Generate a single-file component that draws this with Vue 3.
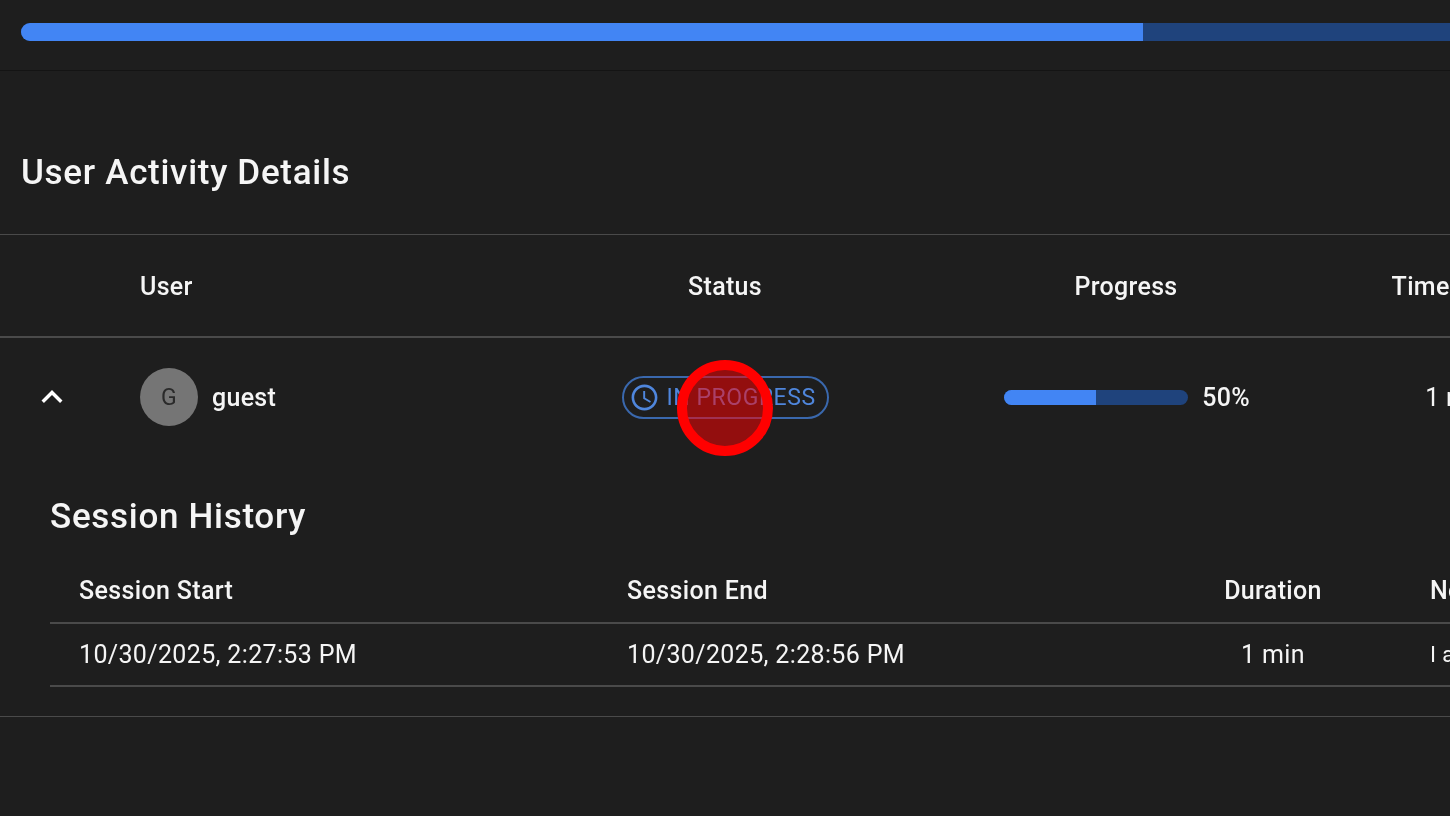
<script setup>
const sessions = [
  { start: '10/30/2025, 2:27:53 PM', end: '10/30/2025, 2:28:56 PM', duration: '1 min', notes: 'I am testing' }
]
</script>

<template>
  <div class="page">
    <div class="top">
      <div class="bar big"><div class="fill big-fill"></div></div>
    </div>

    <h2 class="title">User Activity Details</h2>

    <section class="table">
      <div class="row head">
        <div></div>
        <div class="cell user-head">User</div>
        <div class="cell center">Status</div>
        <div class="cell center">Progress</div>
        <div class="cell center">Time Spent</div>
      </div>

      <div class="row body">
        <div class="expander">
          <svg width="42" height="42" viewBox="0 0 24 24" fill="#fff"><path d="M12 8l-6 6 1.41 1.41L12 10.83l4.59 4.58L18 14z" /></svg>
        </div>
        <div class="cell user">
          <span class="avatar">G</span>
          <span class="name">guest</span>
        </div>
        <div class="cell center">
          <span class="chip">
            <svg width="31" height="31" viewBox="0 0 24 24" fill="#4f86dc"><path d="M11.99 2C6.47 2 2 6.48 2 12s4.47 10 9.99 10C17.52 22 22 17.52 22 12S17.52 2 11.99 2zM12 20c-4.42 0-8-3.58-8-8s3.58-8 8-8 8 3.58 8 8-3.58 8-8 8z" /><path d="M12.5 7H11v6l5.25 3.15.75-1.23-4.5-2.67z" /></svg>
            <span>IN PROGRESS</span>
          </span>
        </div>
        <div class="cell center progress-cell">
          <div class="progress">
            <div class="bar small"><div class="fill small-fill"></div></div>
            <span class="pct">50%</span>
          </div>
        </div>
        <div class="cell center time">1 min</div>
      </div>

      <div class="detail">
        <h3 class="sub-title">Session History</h3>
        <div class="sub-row sub-head">
          <div>Session Start</div>
          <div>Session End</div>
          <div class="center">Duration</div>
          <div>Notes</div>
        </div>
        <div v-for="s in sessions" :key="s.start" class="sub-row sub-body">
          <div>{{ s.start }}</div>
          <div>{{ s.end }}</div>
          <div class="center">{{ s.duration }}</div>
          <div class="note">{{ s.notes }}</div>
        </div>
      </div>
    </section>

    <div class="marker"></div>
  </div>
</template>

<style>
html, body { margin: 0; background: #1e1e1e; overflow: hidden; }
</style>

<style scoped>
.page {
  position: relative;
  width: 1450px;
  height: 816px;
  overflow: hidden;
  background: #1e1e1e;
  color: #f5f5f5;
  font-family: Roboto, "Liberation Sans", sans-serif;
  filter: blur(0.5px);
}
.top {
  box-sizing: border-box;
  width: 1450px;
  height: 71px;
  padding: 23px 0 0 21px;
  border-bottom: 1px solid #141414;
}
.bar { background: #1f437c; overflow: hidden; }
.fill { height: 100%; background: #4285f4; }
.big { width: 1500px; height: 18px; border-radius: 9px 0 0 9px; }
.big-fill { width: 1122px; }
.title {
  margin: 0;
  box-sizing: border-box;
  height: 163px;
  padding: 81px 0 0 21px;
  font-size: 35px;
  line-height: 42px;
  font-weight: 500;
  letter-spacing: 0.7px;
}
.table {
  width: 1700px;
  height: 483px;
  box-sizing: border-box;
  border-top: 1px solid #4a4a4a;
  border-bottom: 1px solid #4a4a4a;
}
.row {
  display: grid;
  grid-template-columns: 114px 462px 298px 504px 158px;
  align-items: center;
}
.head {
  box-sizing: border-box;
  height: 103px;
  padding-top: 2px;
  border-bottom: 2px solid #4a4a4a;
  font-size: 25px;
  font-weight: 500;
  letter-spacing: 0.3px;
}
.user-head { padding-left: 26px; }
.body { height: 118px; font-size: 25px; letter-spacing: 0.3px; }
.cell { white-space: nowrap; min-width: 0; }
.center { text-align: center; }
.progress-cell { padding-left: 2px; }
.expander {
  display: flex;
  justify-content: center;
  padding-right: 10px;
  height: 42px;
}
.user {
  display: flex;
  align-items: center;
  gap: 14px;
  padding-left: 26px;
}
.avatar {
  width: 58px;
  height: 58px;
  border-radius: 50%;
  background: #757575;
  color: #2a2a2a;
  display: flex;
  align-items: center;
  justify-content: center;
  font-size: 23px;
}
.name, .pct { font-weight: 500; }
.chip {
  box-sizing: border-box;
  display: inline-flex;
  align-items: center;
  gap: 7px;
  width: 207px;
  height: 43px;
  padding-left: 5px;
  border: 2px solid #3a68ad;
  border-radius: 22px;
  color: #4f86dc;
  font-size: 23px;
  letter-spacing: 0.55px;
  vertical-align: middle;
}
.progress {
  display: inline-flex;
  align-items: center;
  gap: 14px;
  vertical-align: middle;
}
.small { width: 184px; height: 15px; border-radius: 8px; }
.small-fill { width: 92px; }
.detail { padding: 0 0 0 50px; }
.sub-title {
  margin: 0;
  box-sizing: border-box;
  height: 102px;
  padding-top: 40px;
  font-size: 35px;
  line-height: 42px;
  font-weight: 500;
  letter-spacing: 0.7px;
}
.sub-row {
  display: grid;
  grid-template-columns: 548px 547px 256px 1fr;
  align-items: center;
  border-bottom: 2px solid #4a4a4a;
  font-size: 25px;
  letter-spacing: 0.35px;
  white-space: nowrap;
}
.sub-row > div:first-child,
.sub-row > div:nth-child(2),
.sub-row > div:nth-child(4) { padding-left: 29px; }
.sub-head { height: 64px; font-weight: 500; }
.sub-body { height: 61px; }
.note { font-size: 22px; }
.marker {
  position: absolute;
  left: 677px;
  top: 360px;
  box-sizing: border-box;
  width: 96px;
  height: 96px;
  border-radius: 50%;
  border: 10px solid #ff0000;
  background: rgba(255, 0, 0, 0.52);
}
</style>
